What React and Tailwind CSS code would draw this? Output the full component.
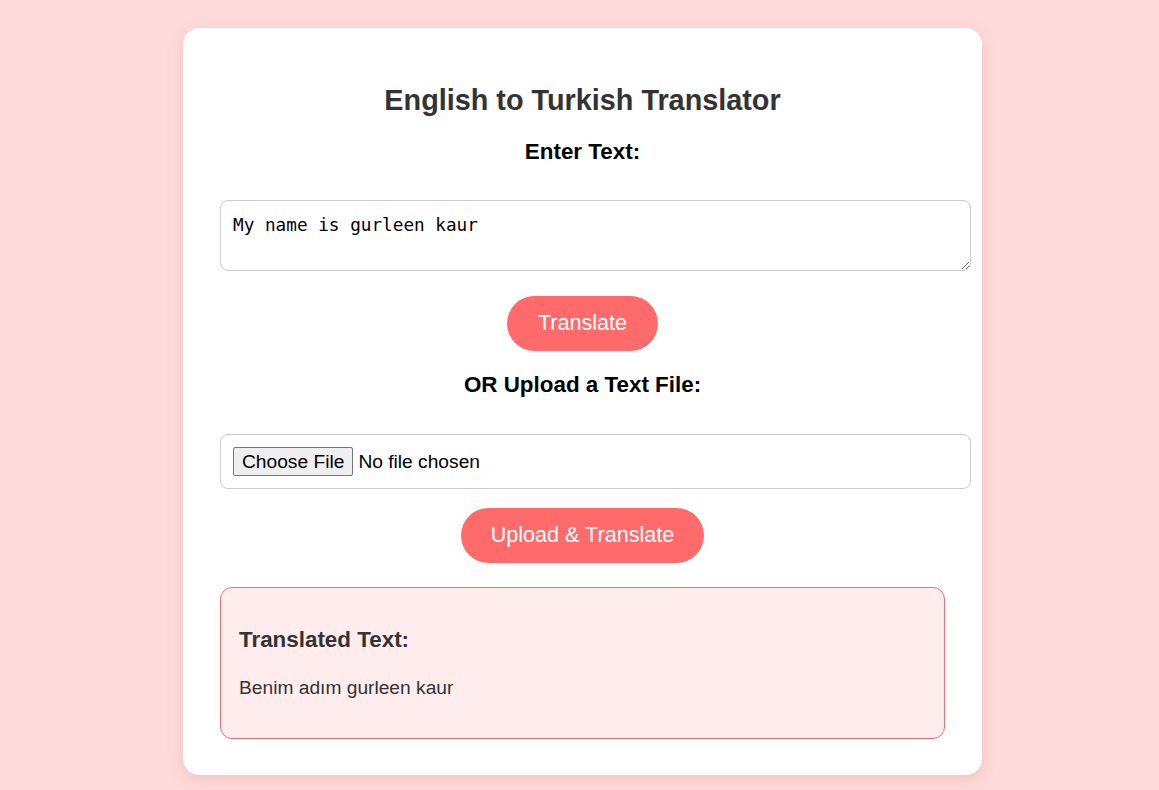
import React, { useState } from "react";

const App = () => {
  const [text, setText] = useState("My name is gurleen kaur");
  const [result] = useState("Benim adım gurleen kaur");

  return (
    <div
      className="min-h-screen w-full bg-[#ffdada] pt-[28px] pb-[15px] pl-[6px]"
      style={{ fontFamily: '"Liberation Sans", Arial, sans-serif' }}
    >
      <div className="mx-auto w-[799px] rounded-[16px] bg-white pt-[40px] px-[37px] pb-[36px] shadow-[0_4px_14px_rgba(200,120,120,0.25)]">
        <h1 className="mt-[16px] text-center text-[28.8px] leading-[32px] font-bold text-[#333]">
          English to Turkish Translator
        </h1>

        <h3 className="mt-[24px] text-center text-[22.4px] leading-[24px] font-bold text-black">
          Enter Text:
        </h3>

        <textarea
          className="mt-[36px] block h-[71px] w-[calc(100%+26px)] rounded-[8px] border border-[#ccc] px-[12px] pt-[14px] pb-[10px] text-[17.7px] leading-[21px] text-black outline-none"
          style={{ fontFamily: '"DejaVu Sans Mono", "Liberation Mono", monospace' }}
          value={text}
          onChange={(e) => setText(e.target.value)}
        />

        <div className="mt-[25px] flex justify-center">
          <button className="h-[55px] rounded-full bg-[#ff6b6b] px-[31px] text-[21.6px] text-white">
            Translate
          </button>
        </div>

        <h3 className="mt-[22px] text-center text-[22.4px] leading-[24px] font-bold text-black">
          OR Upload a Text File:
        </h3>

        <div className="mt-[37px] flex h-[55px] w-[calc(100%+26px)] items-center rounded-[8px] border border-[#ccc] px-[12px]">
          <input
            type="file"
            accept=".txt"
            className="text-[19.2px] text-black file:mr-[5px] file:h-[29px] file:rounded-[2px] file:border file:border-[#767676] file:bg-[#efefef] file:px-[8px] file:text-[19.2px] file:text-black"
          />
        </div>

        <div className="mt-[19px] flex justify-center">
          <button className="h-[55px] rounded-full bg-[#ff6b6b] px-[30px] text-[21.6px] text-white">
            Upload &amp; Translate
          </button>
        </div>

        <div className="mt-[24px] rounded-[12px] border border-[#e57373] bg-[#ffecec] px-[18px] pt-[39px] pb-[39px]">
          <h3 className="text-[22.4px] leading-[26px] font-bold text-[#333]">
            Translated Text:
          </h3>
          <p className="mt-[24px] text-[19.2px] leading-[22px] text-[#333]">{result}</p>
        </div>
      </div>
    </div>
  );
};

export default App;
